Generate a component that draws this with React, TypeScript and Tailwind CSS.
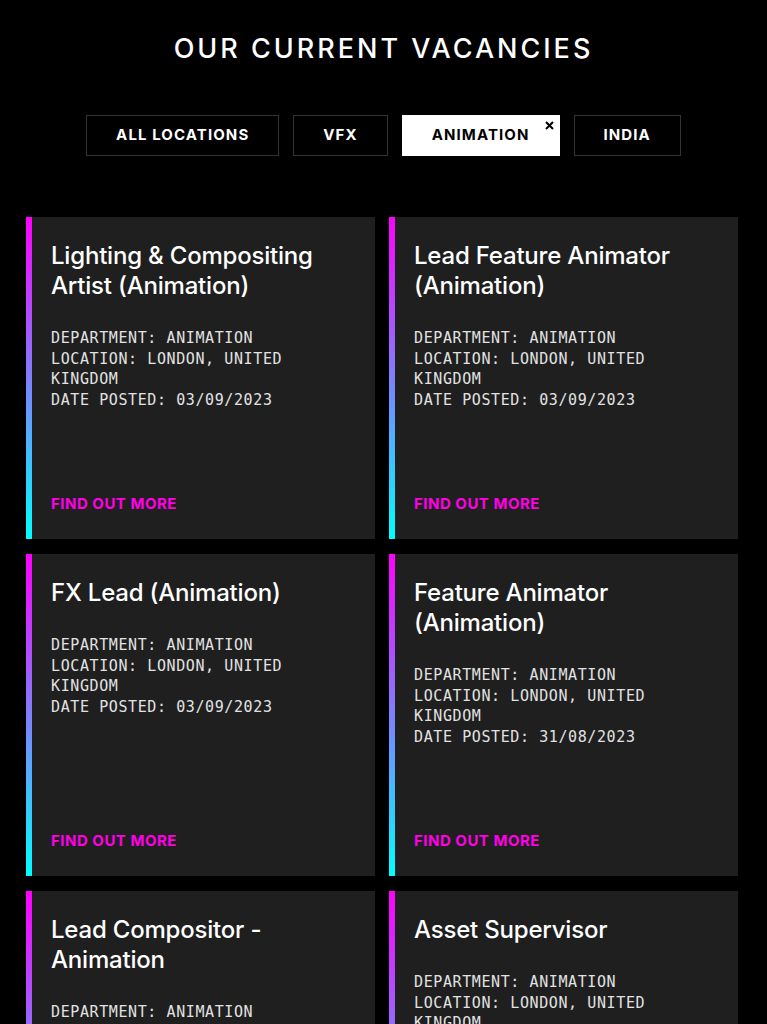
const filters = [
  { label: "ALL LOCATIONS", active: false },
  { label: "VFX", active: false },
  { label: "ANIMATION", active: true },
  { label: "INDIA", active: false },
];

const jobs = [
  {
    title: "Lighting & Compositing Artist (Animation)",
    location: "LONDON, UNITED KINGDOM",
    date: "03/09/2023",
  },
  {
    title: "Lead Feature Animator (Animation)",
    location: "LONDON, UNITED KINGDOM",
    date: "03/09/2023",
  },
  {
    title: "FX Lead (Animation)",
    location: "LONDON, UNITED KINGDOM",
    date: "03/09/2023",
  },
  {
    title: "Feature Animator (Animation)",
    location: "LONDON, UNITED KINGDOM",
    date: "31/08/2023",
  },
  {
    title: "Lead Compositor - Animation",
    location: "LONDON, UNITED KINGDOM",
    date: "31/08/2023",
  },
  {
    title: "Asset Supervisor",
    location: "LONDON, UNITED KINGDOM",
    date: "31/08/2023",
  },
];

const JobCard = ({ job }: { job: (typeof jobs)[number] }) => {
  return (
    <div className="flex h-[322px] bg-[#1f1f1f]">
      <div className="w-[6px] shrink-0 bg-linear-to-b/srgb from-[#ff00ff] to-[#00ffff]"></div>
      <div className="flex flex-1 flex-col pl-[19px] pr-5 pt-6 pb-[25px]">
        <h3 className="font-['Inter',sans-serif] text-[24px] font-medium leading-[30px] tracking-[-0.2px] text-white">
          {job.title}
        </h3>
        <div className="mt-[27px] font-['DejaVu_Sans_Mono',monospace] text-[15px] leading-[20.7px] tracking-[0.6px] text-[#e2e2e2]">
          <p>DEPARTMENT: ANIMATION</p>
          <p>LOCATION: {job.location}</p>
          <p>DATE POSTED: {job.date}</p>
        </div>
        <a className="mt-auto font-['Inter',sans-serif] text-[15px] font-bold leading-5 tracking-[0.5px] text-[#ff00e6]">
          FIND OUT MORE
        </a>
      </div>
    </div>
  );
};

export default function App() {
  return (
    <div className="min-h-screen bg-black pb-10">
      <h1 className="pt-[32px] text-center font-['Inter',sans-serif] text-[27px] font-medium leading-[34px] tracking-[3px] text-white">
        OUR CURRENT VACANCIES
      </h1>

      <div className="mt-[49px] flex justify-center gap-[14px]">
        {filters.map((f) => (
          <button
            key={f.label}
            className={
              f.active
                ? "relative h-[41px] border border-white bg-white px-[29px] font-['Inter',sans-serif] text-[15px] font-bold tracking-[1.1px] text-black"
                : "relative h-[41px] border border-[#333333] bg-black px-[29px] font-['Inter',sans-serif] text-[15px] font-bold tracking-[1.1px] text-white"
            }
          >
            {f.label}
            {f.active && (
              <svg
                className="absolute right-[5px] top-[5px]"
                width="9"
                height="9"
                viewBox="0 0 9 9"
              >
                <path d="M1 1L8 8M8 1L1 8" stroke="#000" strokeWidth="2" />
              </svg>
            )}
          </button>
        ))}
      </div>

      <div className="mt-[61px] grid grid-cols-2 gap-x-[14px] gap-y-[15px] pl-[26px] pr-[29px]">
        {jobs.map((job) => (
          <JobCard key={job.title} job={job} />
        ))}
      </div>
    </div>
  );
}
